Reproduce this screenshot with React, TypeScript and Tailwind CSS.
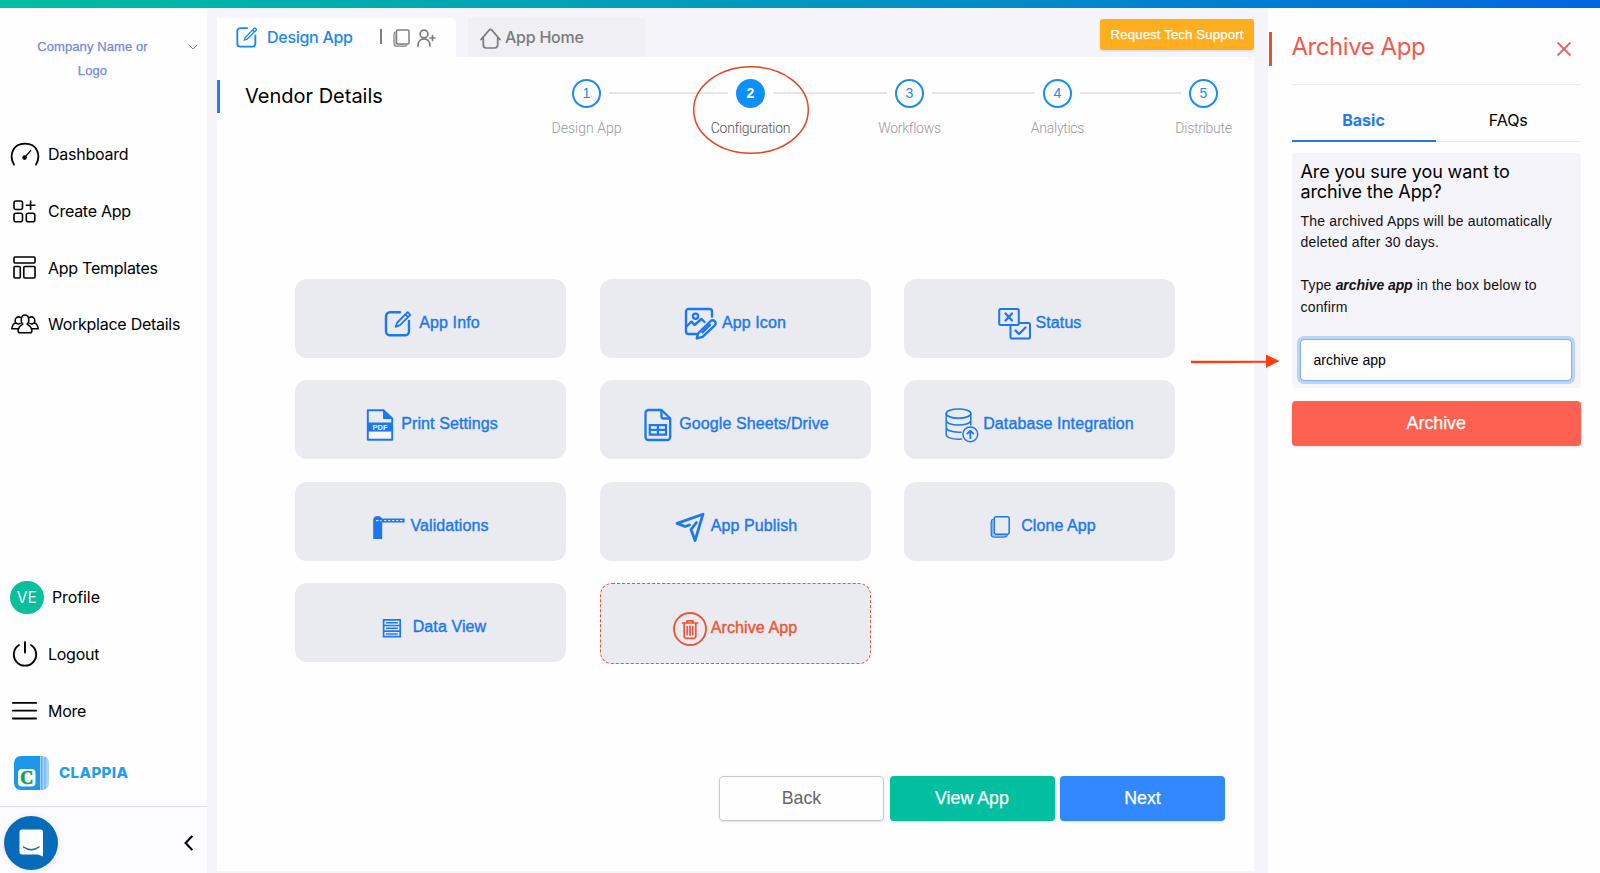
import type { ReactNode } from 'react';
import { clsx } from 'clsx';

const inter = "font-['Inter','Liberation_Sans',sans-serif]";
const helvetica = "font-['Liberation_Sans',Arial,sans-serif]";

interface IconProps {
  className?: string;
}

function EditIcon({ className }: IconProps) {
  return (
    <svg viewBox="0 0 34 34" className={className} fill="none" stroke="currentColor" strokeLinecap="round" strokeLinejoin="round">
      <path d="M18 4.200H8.500A4 4 0 0 0 4.500 8.200V25.500A4 4 0 0 0 8.500 29.500H25A4 4 0 0 0 29 25.500V14" strokeWidth="2.500" />
      <path d="M15 17.500 27.300 4.600A1.300 1.300 0 0 1 29.100 4.500L30 5.300A1.300 1.300 0 0 1 30.100 7.100L18 19.200 14 20.600ZM25.300 6.800 27.800 9.300" strokeWidth="1.900" />
    </svg>
  );
}

function CopyIcon({ className }: IconProps) {
  return (
    <svg viewBox="0 0 17 18" className={className} fill="none" stroke="currentColor">
      <rect x="3.500" y="1" width="12.500" height="14" rx="1.500" strokeWidth="1.500" />
      <path d="M2.700 2.800C1.500 3 1 3.600 1 4.800V15C1 16.500 1.700 17.200 3.200 17.200H12C13.200 17.200 13.900 16.800 14 15.800" strokeWidth="1.100" />
      <path d="M2.200 4V14.600C2.200 15.700 2.700 16.100 3.800 16.100H13" strokeWidth="1.200" opacity="0.500" />
    </svg>
  );
}

const tileIcons: Record<string, ReactNode> = {
  edit: (
    <>
      <path d="M19 5.3H9A4 4 0 0 0 5 9.3V24.3A4 4 0 0 0 9 28.3H24A4 4 0 0 0 28 24.3V14" strokeWidth="2.4" />
      <path d="M16.3 15.5 26.6 5.2 29.3 7.9 19 18.2 14.6 19.8ZM24.4 7.4 27.1 10.1" strokeWidth="1.8" />
    </>
  ),
  image: (
    <>
      <path d="M28 9.5V4.5A2.5 2.5 0 0 0 25.5 2H4.5A2.5 2.5 0 0 0 2 4.5V24.5A2.5 2.5 0 0 0 4.5 27H12" strokeWidth="2.4" />
      <circle cx="11.5" cy="9.3" r="2.6" strokeWidth="2.3" />
      <path d="M2.5 19.5 7.5 14.5 10.5 18 17.5 12 20.500 15" strokeWidth="2.4" />
      <path d="M14 26.5 26.6 14.2A2.900 2.900 0 0 1 30.800 18.300L18.600 29.800 12.800 31.400ZM26 18 18.500 25.500" strokeWidth="2.4" />
    </>
  ),
  status: (
    <>
      <rect x="1.2" y="2" width="19.6" height="16" rx="1.5" strokeWidth="2" />
      <path d="M7.5 6.5 14 13.5M14 6.5 7.5 13.5" strokeWidth="2.3" />
      <path d="M21 16H30.5A1.5 1.5 0 0 1 32 17.5V30A1.5 1.5 0 0 1 30.5 31.5H14A1.5 1.5 0 0 1 12.5 30V18.5" strokeWidth="2" />
      <path d="M17.5 23.5 21 27 27.5 20.5" strokeWidth="2.3" />
    </>
  ),
  pdf: (
    <>
      <path d="M4.8 2.2H20.5L29.2 10.5V31.8H4.8Z" strokeWidth="1.9" />
      <path d="M20.5 2.2V10.5H29.2Z" fill="currentColor" strokeWidth="1" />
      <rect x="4.5" y="14.5" width="25.2" height="9" fill="currentColor" stroke="none" />
      <rect x="6.2" y="24" width="21.6" height="6" fill="#f6f8fd" stroke="none" />
      <text x="17" y="21.8" textAnchor="middle" fill="#e6eefc" stroke="none" fontSize="7.6" fontWeight="700" fontFamily="Liberation Sans, sans-serif">
        PDF
      </text>
    </>
  ),
  sheet: (
    <>
      <path d="M20.5 2H7.500A3 3 0 0 0 4.500 5V29A3 3 0 0 0 7.500 32H26.200A3 3 0 0 0 29.200 29V10.500Z" strokeWidth="2.3" />
      <path d="M20.500 2.500V8.500A2 2 0 0 0 22.500 10.500H29" strokeWidth="2.3" />
      <path d="M8.800 17.200H25V26.600H8.800ZM8.800 21.900H25M16.900 17.200V26.600" strokeWidth="2.200" strokeLinejoin="miter" />
    </>
  ),
  database: (
    <>
      <ellipse cx="13.500" cy="5.500" rx="12.300" ry="4.600" strokeWidth="1.500" />
      <path d="M1.200 5.500V26.500C1.200 29.200 6.500 31.200 13.500 31.200 14.600 31.200 15.600 31.200 16.600 31M25.800 5.500V17M1.200 12.500C1.200 15 6.500 17 13.500 17S25.800 15 25.800 12.500M1.200 19.500C1.200 22 6.500 24.200 13.500 24.200H16" strokeWidth="1.500" />
      <path d="M1.200 6.500C2.500 9 7.500 10.800 13.500 10.800S25 9 25.800 6.500" strokeWidth="0.800" />
      <circle cx="25.300" cy="26.300" r="7.400" strokeWidth="1.500" />
      <path d="M25.300 30.200V22.800M22.300 25.600 25.300 22.600 28.300 25.600" strokeWidth="1.800" />
    </>
  ),
  barrier: (
    <>
      <path d="M1.200 12H10.200V29H1.200Z" fill="currentColor" stroke="none" />
      <path d="M1.200 12.500V9.500C1.200 7.300 3.200 6 5.600 6S9.400 7 10.200 8.600H32.600V12.600H1.200Z" fill="currentColor" stroke="none" />
      <path d="M4 10.600H9.500M12 10.500H31.500" stroke="#d8e5fb" strokeWidth="1.100" strokeDasharray="2.400 1.600" strokeLinecap="butt" />
    </>
  ),
  publish: (
    <path d="M4 13.400 30 4.200 22 30.600 18 19.500 23.500 12.500M4 13.400 12 16.500 16.500 15" strokeWidth="2.800" />
  ),
  clone: (
    <>
      <rect x="11.200" y="6.700" width="15" height="17.500" rx="2" strokeWidth="1.500" />
      <path d="M10 9.300C8.700 9.600 8.200 10.300 8.200 12V24C8.200 26.400 9.200 27.200 11.400 27.200H20.800C22.700 27.200 23.600 26.700 24.100 25.500" strokeWidth="1.300" />
      <path d="M9.600 11.500V23.700C9.600 25.400 10.200 25.900 11.800 25.900H23" strokeWidth="1.200" opacity="0.500" />
    </>
  ),
  data: (
    <>
      <path d="M8.600 8.900H25.200V25.700H8.600ZM8.600 14.500H25.200M8.600 20.100H25.200" strokeWidth="1.700" strokeLinejoin="miter" />
      <path d="M11.500 11.700H22.300M11.500 17.300H22.300M11.500 22.900H22.300" strokeWidth="1.500" />
    </>
  ),
  trash: (
    <>
      <circle cx="17" cy="17" r="16" strokeWidth="1.900" />
      <path d="M9.500 11H24.500M14 11V8.800H20V11M11.200 11V24.500A1.800 1.800 0 0 0 13 26.300H21A1.800 1.800 0 0 0 22.800 24.500V11M14.300 14.500V22.500M17 14V23M19.700 14.500V22.500" strokeWidth="1.700" />
    </>
  ),
};

const tiles = [
  { label: 'App Info', icon: 'edit' },
  { label: 'App Icon', icon: 'image' },
  { label: 'Status', icon: 'status' },
  { label: 'Print Settings', icon: 'pdf' },
  { label: 'Google Sheets/Drive', icon: 'sheet' },
  { label: 'Database Integration', icon: 'database' },
  { label: 'Validations', icon: 'barrier' },
  { label: 'App Publish', icon: 'publish' },
  { label: 'Clone App', icon: 'clone' },
  { label: 'Data View', icon: 'data' },
  { label: 'Archive App', icon: 'trash', danger: true },
];

const steps = [
  { label: 'Design App', line: 'w-[119px]' },
  { label: 'Configuration', line: 'w-[114px]', active: true },
  { label: 'Workflows', line: 'w-[103px]' },
  { label: 'Analytics', line: 'w-[101px]' },
  { label: 'Distribute' },
];

function NavItem({ icon, label }: { icon: ReactNode; label: string }) {
  return (
    <a className="flex h-[56.700px] items-center pl-[10px]">
      <span className="flex w-[29px] justify-center">{icon}</span>
      <span className="ml-[9px] text-base tracking-[-0.260px] text-black">{label}</span>
    </a>
  );
}

function Sidebar() {
  return (
    <aside className={clsx('flex w-[207px] flex-col bg-[#fefefe]', inter)}>
      <div className={clsx('flex h-[118px] justify-between pt-[27px] pr-[9px] pl-[32px]', helvetica)}>
        <p className="w-[121px] text-center text-[13px] leading-[23.500px] tracking-[0.100px] text-[#7389dc] [-webkit-text-stroke:0.250px]">
          Company Name or Logo
        </p>
        <svg viewBox="0 0 10 6" className="mt-[9px] h-[6px] w-[10px]" fill="none" stroke="#6f86d8">
          <path d="M0.700 0.800 5 5 9.300 0.800" />
        </svg>
      </div>

      <nav>
        <NavItem
          label="Dashboard"
          icon={
            <svg viewBox="0 0 30 24" className="h-[24px] w-[30px] shrink-0" fill="none" stroke="#000" strokeWidth="1.800" strokeLinecap="round">
              <path d="M4 22.600C-1.500 13 3 1.700 15 1.700S31.500 13 26 22.600" />
              <circle cx="14.600" cy="15.600" r="2.300" fill="#000" stroke="none" />
              <path d="M14.600 15.600 20.600 8.600" strokeWidth="1.400" />
            </svg>
          }
        />
        <NavItem
          label="Create App"
          icon={
            <svg viewBox="0 0 23 23" className="h-[23px] w-[23px]" fill="none" stroke="#000" strokeWidth="1.600">
              <rect x="1" y="1" width="8.500" height="8.500" rx="2" />
              <rect x="1" y="13.300" width="8.500" height="8.500" rx="2" />
              <rect x="13.300" y="13.300" width="8.500" height="8.500" rx="2" />
              <path d="M17.600 0.500V10M12.800 5.300H22.500" />
            </svg>
          }
        />
        <NavItem
          label="App Templates"
          icon={
            <svg viewBox="0 0 23 23" className="h-[23px] w-[23px]" fill="none" stroke="#000" strokeWidth="1.600">
              <rect x="1" y="1" width="21" height="6" rx="1" />
              <rect x="1" y="10.500" width="6.300" height="11.500" rx="1" />
              <rect x="10.800" y="10.500" width="11.200" height="11.500" rx="1" />
            </svg>
          }
        />
        <NavItem
          label="Workplace Details"
          icon={
            <svg viewBox="0 0 28 20" className="h-[20px] w-[28px]" fill="none" stroke="#000" strokeWidth="1.500" strokeLinejoin="round">
              <path d="M9.200 18.800C7.400 18.800 6.700 17.600 7.200 15.800 7.800 13.300 9.300 11.500 11.900 10.200 9.300 8.200 9.600 1 14 1S18.700 8.200 16.100 10.200C18.700 11.500 20.200 13.300 20.800 15.800 21.300 17.600 20.600 18.800 18.800 18.800Z" />
              <path d="M10 3.900C6.500 1.300 3 4.500 4.600 8.600 2.400 9.700 1.200 11.700 0.800 14.800H7.300M4.600 8.600C6 10.300 8.300 10.300 9.700 9" />
              <path d="M18 3.900C21.500 1.300 25 4.500 23.400 8.600 25.600 9.700 26.800 11.700 27.200 14.800H20.700M23.400 8.600C22 10.300 19.700 10.300 18.300 9" />
            </svg>
          }
        />
      </nav>

      <div className="mt-auto">
        <a className="flex h-[56.700px] items-center pl-[10px]">
          <span className="flex size-[33.500px] items-center justify-center rounded-full bg-[#05bf9d] text-[15.500px] text-white">VE</span>
          <span className="ml-[8.500px] text-base tracking-[-0.100px]">Profile</span>
        </a>
        <NavItem
          label="Logout"
          icon={
            <svg viewBox="0 0 26 26" className="h-[26px] w-[26px]" fill="none" stroke="#000" strokeWidth="1.900" strokeLinecap="round">
              <path d="M7 4A11.200 11.200 0 1 0 19 4M13 1.200V11.500" />
            </svg>
          }
        />
        <NavItem
          label="More"
          icon={
            <svg viewBox="0 0 25 18" className="h-[18px] w-[25px]" fill="none" stroke="#000" strokeWidth="1.800" strokeLinecap="round">
              <path d="M0.900 0.900H24.100M0.900 8.700H24.100M0.900 16.500H24.100" />
            </svg>
          }
        />
        <a className="flex h-[67px] items-center pl-[14px]">
          <svg viewBox="0 0 36 34" className="h-[34px] w-[36px]">
            <path d="M25 0H28C32.500 0 35 3 35 7V27C35 31 32.500 34 28 34H25Z" fill="#a9d2fa" />
            <path d="M27 0H28.500V34H27ZM30.500 1H31.500V33H30.500Z" fill="#5aaef5" />
            <path d="M7 0H26V34H7A7 7 0 0 1 0 27V7A7 7 0 0 1 7 0Z" fill="#1c97ea" />
            <rect x="4" y="13" width="17.500" height="17.500" rx="4" fill="#f6fbfa" />
            <text x="12.800" y="28" textAnchor="middle" fontSize="18" fontWeight="700" fill="#1c9b5f" stroke="#1c9b5f" strokeWidth="0.700" fontFamily="Liberation Serif, serif">
              C
            </text>
          </svg>
          <span className="mt-[2px] ml-[9px] text-[15px] font-extrabold tracking-[0.400px] text-[#259cee]">CLAPPIA</span>
        </a>
        <div className="flex h-[67px] items-center justify-between border-t border-[#e0e0ea] bg-[#fcfcfe] pt-[5px] pr-[14px] pl-[4px]">
          <button className="flex size-[54px] items-center justify-center rounded-full bg-[#066bb9] shadow-[0_1px_8px_rgba(0,0,0,0.1)]">
            <svg viewBox="0 0 25 28" className="h-[28px] w-[25px]">
              <path d="M3 0.500H21.500A2.500 2.500 0 0 1 24 3V27.500L19 25.500H3A2.500 2.500 0 0 1 0.500 23V3A2.500 2.500 0 0 1 3 0.500Z" fill="#fff" />
              <path d="M4.500 18C9 21.500 15.500 21.500 20 18" fill="none" stroke="#066bb9" strokeWidth="1.500" strokeLinecap="round" />
            </svg>
          </button>
          <svg viewBox="0 0 9 16" className="h-[16px] w-[9px]" fill="none" stroke="#000" strokeWidth="2.200">
            <path d="M8.300 0.900 1.600 8 8.300 15.100" />
          </svg>
        </div>
      </div>
    </aside>
  );
}

function TabBar() {
  return (
    <div className="flex h-[49px] items-end">
      <div className={clsx('flex h-[39px] w-[239px] items-center rounded-tr bg-[#fefefe] pb-[2px] pl-[17px] font-medium text-[#1c86f2]', inter)}>
        <EditIcon className="mt-[1px] size-[25px]" />
        <span className="ml-[8px] text-base tracking-[-0.280px]">Design App</span>
        <span className="ml-[27px] h-[15px] w-[2px] bg-[#7d7d7d]" />
        <CopyIcon className="mt-[2px] ml-[11px] h-[18px] w-[17px] text-[#7d7d7d]" />
        <svg viewBox="0 0 19 18" className="mt-[2px] ml-[7px] h-[18px] w-[19px]" fill="none" stroke="#7d7d7d" strokeWidth="1.700" strokeLinecap="round">
          <circle cx="7" cy="5" r="3.900" />
          <path d="M1 17C1 7.500 13 7.500 13 17M15.500 6.500V11.500M13 9H18" />
        </svg>
      </div>
      <div className={clsx('ml-[12px] flex h-[39px] w-[177px] items-center bg-[#efeff4] pb-[1px] pl-[12px] font-medium text-[#7b7b7b]', inter)}>
        <svg viewBox="0 0 21 21" className="mt-[2px] h-[21px] w-[21px]" fill="none" stroke="#7b7b7b" strokeWidth="1.700" strokeLinecap="round" strokeLinejoin="round">
          <path d="M1 11.500 9.400 1.900A1.500 1.500 0 0 1 11.600 1.900L20 11.500M3.300 10V17A3 3 0 0 0 6.300 20H14.700A3 3 0 0 0 17.700 17V10" />
        </svg>
        <span className="ml-[4px] text-base tracking-[-0.250px]">App Home</span>
      </div>
      <button className={clsx('mb-[7px] ml-auto h-[31px] w-[154px] rounded-[3px] bg-[#ffae20] text-[13.300px] tracking-[0.080px] text-white shadow-sm [-webkit-text-stroke:0.250px]', helvetica)}>
        Request Tech Support
      </button>
    </div>
  );
}

function Stepper() {
  return (
    <ol className={clsx('flex', helvetica)}>
      {steps.map((step, i) => (
        <li key={step.label} className="flex">
          <div className="flex w-[29px] flex-col items-center">
            <span
              className={clsx(
                'flex size-[29px] shrink-0 items-center justify-center rounded-full border-2 border-[#1a8cf5] text-[14px]',
                step.active ? 'bg-[#0a90ff] font-bold text-white' : 'text-[#1a8cf5]',
              )}
            >
              {i + 1}
            </span>
            <span
              className={clsx(
                "mt-[10px] font-['Roboto'] text-[14px] leading-5 font-light whitespace-nowrap",
                i === 0 ? 'tracking-normal' : 'tracking-[-0.270px]',
                step.active ? 'text-[#555]' : 'text-[#9a9a9e]',
              )}
            >
              {step.label}
            </span>
          </div>
          {step.line && <span className={clsx('mx-[8px] mt-[13px] h-[1.500px] bg-[#e6e6ea]', step.line)} />}
        </li>
      ))}
    </ol>
  );
}

function Tile({ label, icon, danger }: { label: string; icon: string; danger?: boolean }) {
  return (
    <button
      className={clsx(
        'flex items-center justify-center gap-[4px] rounded-[12px] bg-[#eaebf1] pt-[11px]',
        danger ? 'h-[81px] border border-dashed border-[#e0563d] text-[#ea5636]' : 'h-[79px] text-[#1b78f0]',
      )}
    >
      <svg viewBox="0 0 34 34" className="size-[34px] overflow-visible" fill="none" stroke="currentColor" strokeLinecap="round" strokeLinejoin="round">
        {tileIcons[icon]}
      </svg>
      <span className="pb-[2px] text-base tracking-[0.100px] [-webkit-text-stroke:0.400px]">{label}</span>
    </button>
  );
}

function MainPanel() {
  return (
    <main className={clsx('flex w-[1037px] flex-col', helvetica)}>
      <TabBar />
      <section className="flex h-[814px] flex-col bg-[#fefefe]">
        <div className="flex h-[120px] items-start">
          <span className="mt-[23px] h-[33px] w-[2.500px] bg-[#1f7fee]" />
          <h1 className={clsx('mt-[23px] ml-[25.500px] w-[327px] text-[20px] leading-[32px]', inter)}>Vendor Details</h1>
          <div className="mt-[22px]">
            <Stepper />
          </div>
        </div>
        <div className="mt-[102px] grid grid-cols-[271px_271px_271px] items-start gap-x-[33.500px] gap-y-[22.300px] pl-[78px]">
          {tiles.map((tile) => (
            <Tile key={tile.label} {...tile} />
          ))}
        </div>
        <div className="mt-auto mb-[50.500px] flex justify-end gap-[5.500px] pr-[29px] text-[17.800px]">
          <button className="h-[45px] w-[165px] rounded-[4px] border border-[#c9c8d0] text-[#666] shadow-sm">Back</button>
          <button className="h-[45px] w-[165px] rounded-[4px] bg-[#02bf9f] text-white shadow-sm [-webkit-text-stroke:0.250px]">View App</button>
          <button className="h-[45px] w-[165px] rounded-[4px] bg-[#3188ff] text-white shadow-sm [-webkit-text-stroke:0.250px]">Next</button>
        </div>
      </section>
    </main>
  );
}

function ArchivePanel() {
  return (
    <aside className={clsx('ml-[14px] flex flex-1 bg-[#fefefe]', helvetica)}>
      <span className="mt-[24px] ml-px h-[34px] w-[2.500px] bg-[#dd5334]" />
      <div className="ml-[20px] w-[289.500px]">
        <header className="flex h-[77px] items-center justify-between border-b border-[#e9e9ee] pr-[10px]">
          <h2 className={clsx('mt-[2px] text-[24px] tracking-[-0.450px] text-[#ef5b4f]', inter)}>Archive App</h2>
          <svg viewBox="0 0 14 14" className="mt-[5px] size-[14px]" fill="none" stroke="#ef5b4f" strokeWidth="1.900">
            <path d="M0.500 0.500 13.500 13.500M13.500 0.500 0.500 13.500" />
          </svg>
        </header>
        <div className={clsx('flex h-[57px] items-end text-base', inter)}>
          <button className="h-[38px] w-[144px] border-b-2 border-[#1f78e8] pb-[4px] font-bold text-[#2579ee]">Basic</button>
          <button className="h-[38px] flex-1 border-b border-[#e9e9ee] pb-[5px] tracking-[-0.100px]">FAQs</button>
        </div>

        <div className="mt-[11px] h-[235px] rounded-[4px] bg-[#f5f4fb] px-[9px] pt-[9px]">
          <h3 className={clsx('text-[18px] leading-[20px] tracking-[-0.120px]', inter)}>
            Are you sure you want to
            <br />
            archive the App?
          </h3>
          <p className="mt-[9px] text-[14px] leading-[21.400px] tracking-[0.180px] text-[#111]">
            The archived Apps will be automatically deleted after 30 days.
          </p>
          <p className="mt-[21.400px] text-[14px] leading-[21.400px] tracking-[0.180px] text-[#111]">
            Type <b className="tracking-[-0.080px] italic">archive app</b> in the box below to confirm
          </p>
          <input
            readOnly
            value="archive app"
            className="mt-[21px] -ml-px h-[42px] w-[272px] rounded-[4px] border border-[#80b0f8] bg-white px-[13px] text-[14px] text-black ring-3 ring-[#b9d3fb] outline-none"
          />
        </div>
        <button className="mt-[13px] h-[45px] w-full rounded-[4px] bg-[#fe614f] text-[17.800px] text-white shadow-sm [-webkit-text-stroke:0.250px]">
          Archive
        </button>
      </div>
    </aside>
  );
}

export default function App() {
  return (
    <div className="relative flex h-[873px] w-[1600px] flex-col overflow-hidden bg-[#f4f4fa] text-black">
      <div className="h-[8px] shrink-0 bg-linear-to-r from-[#00bd9f] via-[#0097c0] via-50% to-[#0066e0]" />
      <div className="flex h-[865px]">
        <Sidebar />
        <div className="w-[10px] shrink-0" />
        <MainPanel />
        <ArchivePanel />
      </div>

      {/* red callouts */}
      <svg viewBox="0 0 118 90" className="absolute top-[65px] left-[692px] h-[90px] w-[118px]" fill="none" stroke="#e8431f" strokeWidth="1.500">
        <ellipse cx="59" cy="45" rx="57.300" ry="43.200" />
      </svg>
      <svg viewBox="0 0 90 14" className="absolute top-[354px] left-[1190px] h-[14px] w-[90px]" fill="#ff3c0c">
        <path d="M1 6.700H76V0.500L89.500 7 76 13.800V8.800L1 9.300Z" />
      </svg>
    </div>
  );
}
